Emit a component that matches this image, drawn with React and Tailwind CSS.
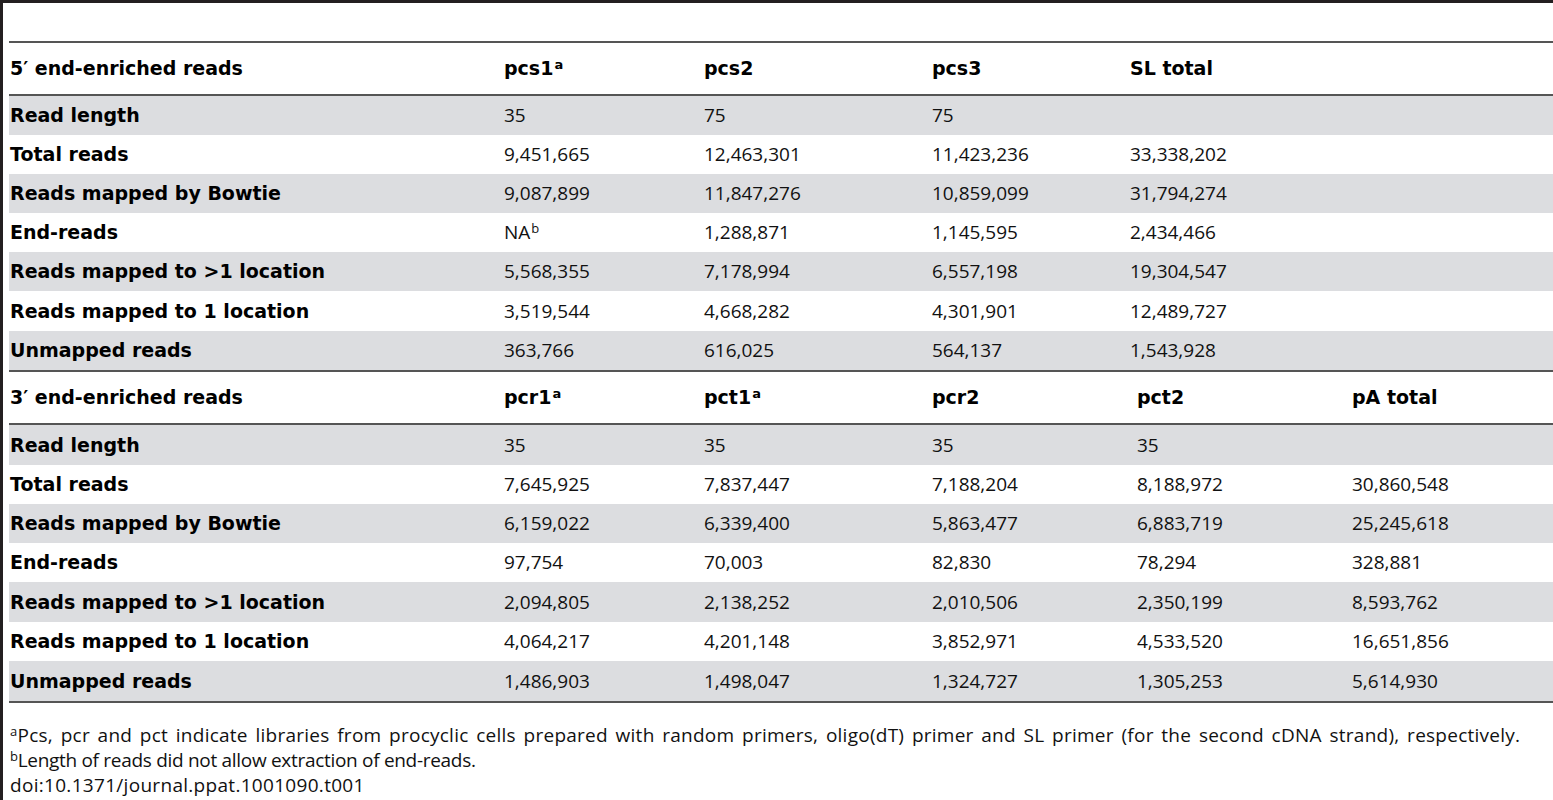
import React from 'react'

const bold = { fontFamily: '"DejaVu Sans", Verdana, sans-serif' }

const section1 = {
    title: '5′ end-enriched reads',
    cols: 'grid-cols-[494px_200px_228px_198px_1fr]',
    heads: [['pcs1', 'a'], ['pcs2'], ['pcs3'], ['SL total']],
    heights: ['h-[39px]', 'h-[39px]', 'h-[39px]', 'h-[39px]', 'h-[39px]', 'h-[40px]', 'h-[39px]'],
    rows: [
        ['Read length', '35', '75', '75', ''],
        ['Total reads', '9,451,665', '12,463,301', '11,423,236', '33,338,202'],
        ['Reads mapped by Bowtie', '9,087,899', '11,847,276', '10,859,099', '31,794,274'],
        ['End-reads', 'NA|b', '1,288,871', '1,145,595', '2,434,466'],
        ['Reads mapped to >1 location', '5,568,355', '7,178,994', '6,557,198', '19,304,547'],
        ['Reads mapped to 1 location', '3,519,544', '4,668,282', '4,301,901', '12,489,727'],
        ['Unmapped reads', '363,766', '616,025', '564,137', '1,543,928'],
    ],
}

const section2 = {
    title: '3′ end-enriched reads',
    cols: 'grid-cols-[494px_200px_228px_205px_215px_1fr]',
    heads: [['pcr1', 'a'], ['pct1', 'a'], ['pcr2'], ['pct2'], ['pA total']],
    heights: ['h-[40px]', 'h-[39px]', 'h-[39px]', 'h-[39px]', 'h-[40px]', 'h-[39px]', 'h-[40px]'],
    rows: [
        ['Read length', '35', '35', '35', '35', ''],
        ['Total reads', '7,645,925', '7,837,447', '7,188,204', '8,188,972', '30,860,548'],
        ['Reads mapped by Bowtie', '6,159,022', '6,339,400', '5,863,477', '6,883,719', '25,245,618'],
        ['End-reads', '97,754', '70,003', '82,830', '78,294', '328,881'],
        ['Reads mapped to >1 location', '2,094,805', '2,138,252', '2,010,506', '2,350,199', '8,593,762'],
        ['Reads mapped to 1 location', '4,064,217', '4,201,148', '3,852,971', '4,533,520', '16,651,856'],
        ['Unmapped reads', '1,486,903', '1,498,047', '1,324,727', '1,305,253', '5,614,930'],
    ],
}

function Cell({ value }) {
    const [text, sup] = value.split('|')
    return (
        <div className="pl-px text-[19px] text-[#111]">
            {text}
            {sup && <sup className="text-[13px] ml-px">{sup}</sup>}
        </div>
    )
}

function Section({ data }) {
    return (
        <>
            <div className={`grid ${data.cols} items-center h-[51px] font-bold text-[19px] text-black`} style={bold}>
                <div className="pl-px">{data.title}</div>
                {data.heads.map(([h, sup]) => (
                    <div key={h} className="pl-px">
                        {h}
                        {sup && <sup className="text-[13px] ml-px">{sup}</sup>}
                    </div>
                ))}
            </div>
            <div className="h-[2px] bg-[#555]" />
            {data.rows.map((row, i) => (
                <div key={row[0]} className={`grid ${data.cols} items-center ${data.heights[i]} ${i % 2 === 0 ? 'bg-[#dcdde0]' : 'bg-white'}`}>
                    <div className="pl-px font-bold text-[19px] text-black" style={bold}>{row[0]}</div>
                    {row.slice(1).map((v, j) => <Cell key={j} value={v} />)}
                </div>
            ))}
            <div className="h-[2px] bg-[#555]" />
        </>
    )
}

export default function App() {
    return (
        <div className="h-[800px] overflow-hidden bg-white border-t-[3px] border-l-[3px] border-[#231f20]" style={{ fontFamily: '"Open Sans", "Liberation Sans", sans-serif' }}>
            <div className="pl-[6px] pt-[38px]">
                <div className="h-[2px] bg-[#555]" />
                <Section data={section1} />
                <Section data={section2} />
                <div className="pt-[20px] pl-px text-[19px] leading-[25px] text-[#111] whitespace-nowrap">
                    <p className="tracking-[0.25px] [word-spacing:2.5px]"><sup className="text-[13px]">a</sup>Pcs, pcr and pct indicate libraries from procyclic cells prepared with random primers, oligo(dT) primer and SL primer (for the second cDNA strand), respectively.</p>
                    <p className="tracking-[-0.3px]"><sup className="text-[13px]">b</sup>Length of reads did not allow extraction of end-reads.</p>
                    <p className="tracking-[0.3px]">doi:10.1371/journal.ppat.1001090.t001</p>
                </div>
            </div>
        </div>
    )
}
